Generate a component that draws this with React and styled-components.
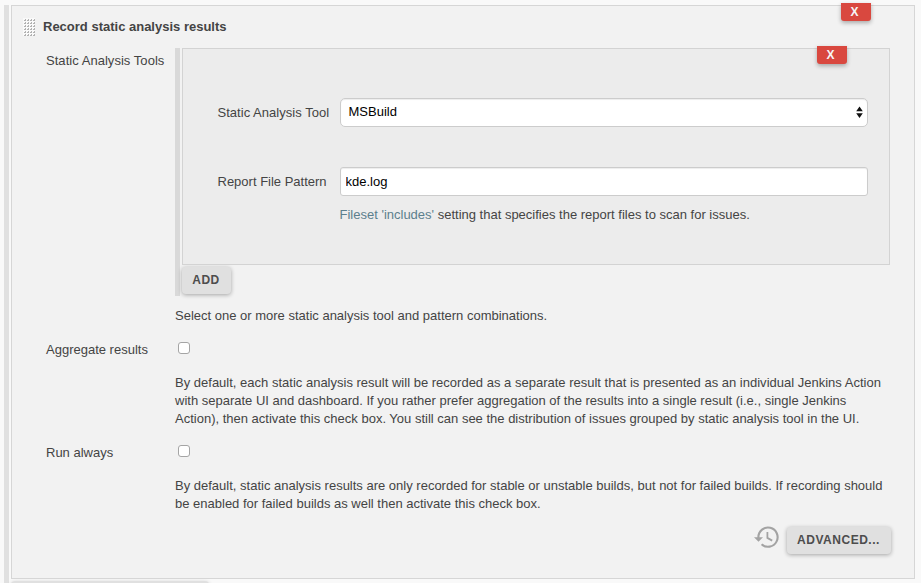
import React from "react";
import styled, { createGlobalStyle } from "styled-components";

const GlobalStyle = createGlobalStyle`
  * { box-sizing: border-box; }
  body {
    margin: 0;
    overflow: hidden;
    background: #f9f9f9;
    color: #444;
    font: 13px/18px "Liberation Sans", Helvetica, Arial, sans-serif;
  }
`;

const Page = styled.main`
  display: flex;
  gap: 2px;
  width: 921px;
  height: 583px;
  padding: 5px 6px 0 4px;
  overflow: hidden;
`;

const Rail = styled.div`
  flex: 0 0 5px;
  background: ${(p) => p.$color};
`;

const Steps = styled.div`
  flex: 1;
  min-width: 0;
`;

const Panel = styled.section`
  position: relative;
  height: 574px;
  border: 1px solid #d6d6d6;
  background: #f2f2f2;
`;

const NextButton = styled.div`
  width: 198px;
  height: 30px;
  margin-top: 2px;
  border-radius: 4px;
  background: #e0e0e0;
  box-shadow: 0 1px 4px rgba(0, 0, 0, 0.2);
`;

const DeleteButton = styled.button`
  position: absolute;
  top: -3px;
  right: ${(p) => p.$right}px;
  width: 30px;
  height: 18px;
  padding: 0 3px 0 0;
  border: 0;
  border-radius: 0 0 3px 3px;
  background: #d9483f;
  color: #f6f6f6;
  font: bold 12px/18px "Liberation Sans", Helvetica, sans-serif;
  box-shadow: 0 2px 4px rgba(0, 0, 0, 0.3);
`;

const Header = styled.header`
  display: flex;
  gap: 7px;
  height: 42px;
  padding: 12px 0 0 11px;
`;

const Title = styled.h2`
  margin: 0;
  font-size: 13px;
  line-height: 18px;
`;

const Row = styled.div`
  display: grid;
  grid-template-columns: 129px 715px;
  height: ${(p) => p.$height}px;
  padding-left: 34px;
`;

const Label = styled.span`
  display: block;
  padding-top: ${(p) => p.$top}px;
  letter-spacing: ${(p) => p.$tracking || 0}px;
  white-space: nowrap;
`;

const ToolList = styled.div`
  display: flex;
  gap: 2px;
  height: 248px;
`;

const ToolColumn = styled.div`
  flex: 1;
`;

const ToolPanel = styled.div`
  position: relative;
  width: 708px;
  height: 217px;
  padding: 49px 21px 0 34.5px;
  border: 1px solid #d3d3d3;
  background: #ececec;
`;

const Field = styled.div`
  display: grid;
  grid-template-columns: 122.5px 1fr;
  height: 69px;
`;

const controlBox = `
  width: 100%;
  height: 29px;
  border: 1px solid #ccc;
  background: #fff;
  color: #000;
  font: 13px "Liberation Sans", Helvetica, sans-serif;
  box-shadow: inset 0 1px 1px rgba(0, 0, 0, 0.075);
`;

const SelectBox = styled.div`
  ${controlBox}
  display: flex;
  align-items: center;
  justify-content: space-between;
  padding: 0 4px 2px 7.5px;
  border-radius: 5px;
`;

const TextInput = styled.input`
  ${controlBox}
  padding: 0 4.5px;
  border-radius: 3px;
`;

const Description = styled.p`
  margin: 0;
  padding-top: ${(p) => p.$top || 0}px;
`;

const Line = styled.span`
  display: block;
  white-space: nowrap;
  letter-spacing: ${(p) => p.$tracking || 0}px;
`;

const Link = styled.a`
  margin-left: -0.5px;
  color: #5c7f8d;
`;

const Button = styled.button`
  display: block;
  width: ${(p) => p.$width}px;
  height: 27px;
  margin: ${(p) => p.$margin || 0};
  padding: 0 0 2px;
  border: 0;
  border-radius: 4px;
  background: #e0e0e0;
  color: #4d4d4d;
  font: bold 12px "Liberation Sans", Helvetica, sans-serif;
  letter-spacing: ${(p) => p.$tracking}px;
  box-shadow: 0 1px 4px rgba(0, 0, 0, 0.32);
`;

const Checkbox = styled.input`
  appearance: none;
  display: block;
  width: 12px;
  height: 12px;
  margin: 2px 0 0 3px;
  border: 1px solid #a5a5a5;
  border-radius: 3px;
  background: #fff;
`;

const Footer = styled.footer`
  display: flex;
  justify-content: flex-end;
  gap: 8px;
  padding-right: 23.5px;
`;

const Icon = styled.svg`
  display: block;
  flex: none;
`;

function DragHandle() {
  const dots = [];
  for (let y = 0; y < 6; y++) {
    for (let x = 0; x < 4; x++) dots.push([x * 3 + 1, y * 3 + 1]);
  }
  return (
    <Icon width="13" height="18" viewBox="0 0 13 18">
      <rect width="12" height="18" fill="#fafafa" />
      {dots.map(([x, y]) => (
        <path key={`${x}-${y}`} d={`M${x} ${y + 2}V${y + 1}h1v-1h1v2z`} fill="#b2b2b2" />
      ))}
    </Icon>
  );
}

function HistoryIcon() {
  return (
    <Icon width="25" height="25" viewBox="0 0 25 25" fill="none" stroke="#a3a3a3">
      <path d="M4.4 13.2V12.2A9.6 9.6 0 1 1 7.6 19.3" strokeWidth="2.1" />
      <path d="M0 12.2h9l-4.5 4.6z" fill="#a3a3a3" stroke="none" />
      <path d="M13.4 7v5.9l4.8 2.7" strokeWidth="1.8" />
    </Icon>
  );
}

export default function App() {
  return (
    <>
      <GlobalStyle />
      <Page>
        <Rail $color="#e0e0e0" />
        <Steps>
          <Panel>
            <DeleteButton $right={43}>X</DeleteButton>
            <Header>
              <DragHandle />
              <Title>Record static analysis results</Title>
            </Header>
            <Row $height={292}>
              <Label $top={4} $tracking={0.04}>Static Analysis Tools</Label>
              <div>
                <ToolList>
                  <Rail $color="#d9d9d9" />
                  <ToolColumn>
                    <ToolPanel>
                      <DeleteButton $right={42}>X</DeleteButton>
                      <Field>
                        <Label $top={6} $tracking={0.03}>Static Analysis Tool</Label>
                        <SelectBox>
                          MSBuild
                          <Icon width="7" height="12" viewBox="0 0 7 12">
                            <path d="M3.5 .5 6.8 5.3H.2zM.2 7.2h6.6L3.5 12z" fill="#111" />
                          </Icon>
                        </SelectBox>
                      </Field>
                      <Field>
                        <Label $top={6}>Report File Pattern</Label>
                        <div>
                          <TextInput defaultValue="kde.log" />
                          <Description $top={10}>
                            <Line>
                              <Link>Fileset 'includes'</Link> setting that specifies the report files to scan for issues.
                            </Line>
                          </Description>
                        </div>
                      </Field>
                    </ToolPanel>
                    <Button $width={49} $tracking={0.5} $margin="2px 0 0 -0.5px">ADD</Button>
                  </ToolColumn>
                </ToolList>
                <Description $top={11}>
                  <Line>Select one or more static analysis tool and pattern combinations.</Line>
                </Description>
              </div>
            </Row>
            <Row $height={103}>
              <Label $top={1}>Aggregate results</Label>
              <div>
                <Checkbox type="checkbox" />
                <Description $top={20}>
                  <Line $tracking={0.005}>By default, each static analysis result will be recorded as a separate result that is presented as an individual Jenkins Action</Line>
                  <Line>with separate UI and dashboard. If you rather prefer aggregation of the results into a single result (i.e., single Jenkins</Line>
                  <Line>Action), then activate this check box. You still can see the distribution of issues grouped by static analysis tool in the UI.</Line>
                </Description>
              </div>
            </Row>
            <Row $height={82}>
              <Label $top={1}>Run always</Label>
              <div>
                <Checkbox type="checkbox" />
                <Description $top={20}>
                  <Line>By default, static analysis results are only recorded for stable or unstable builds, but not for failed builds. If recording should</Line>
                  <Line>be enabled for failed builds as well then activate this check box.</Line>
                </Description>
              </div>
            </Row>
            <Footer>
              <HistoryIcon />
              <Button $width={104} $tracking={0.52} $margin="2px 0 0">ADVANCED...</Button>
            </Footer>
          </Panel>
          <NextButton />
        </Steps>
      </Page>
    </>
  );
}
